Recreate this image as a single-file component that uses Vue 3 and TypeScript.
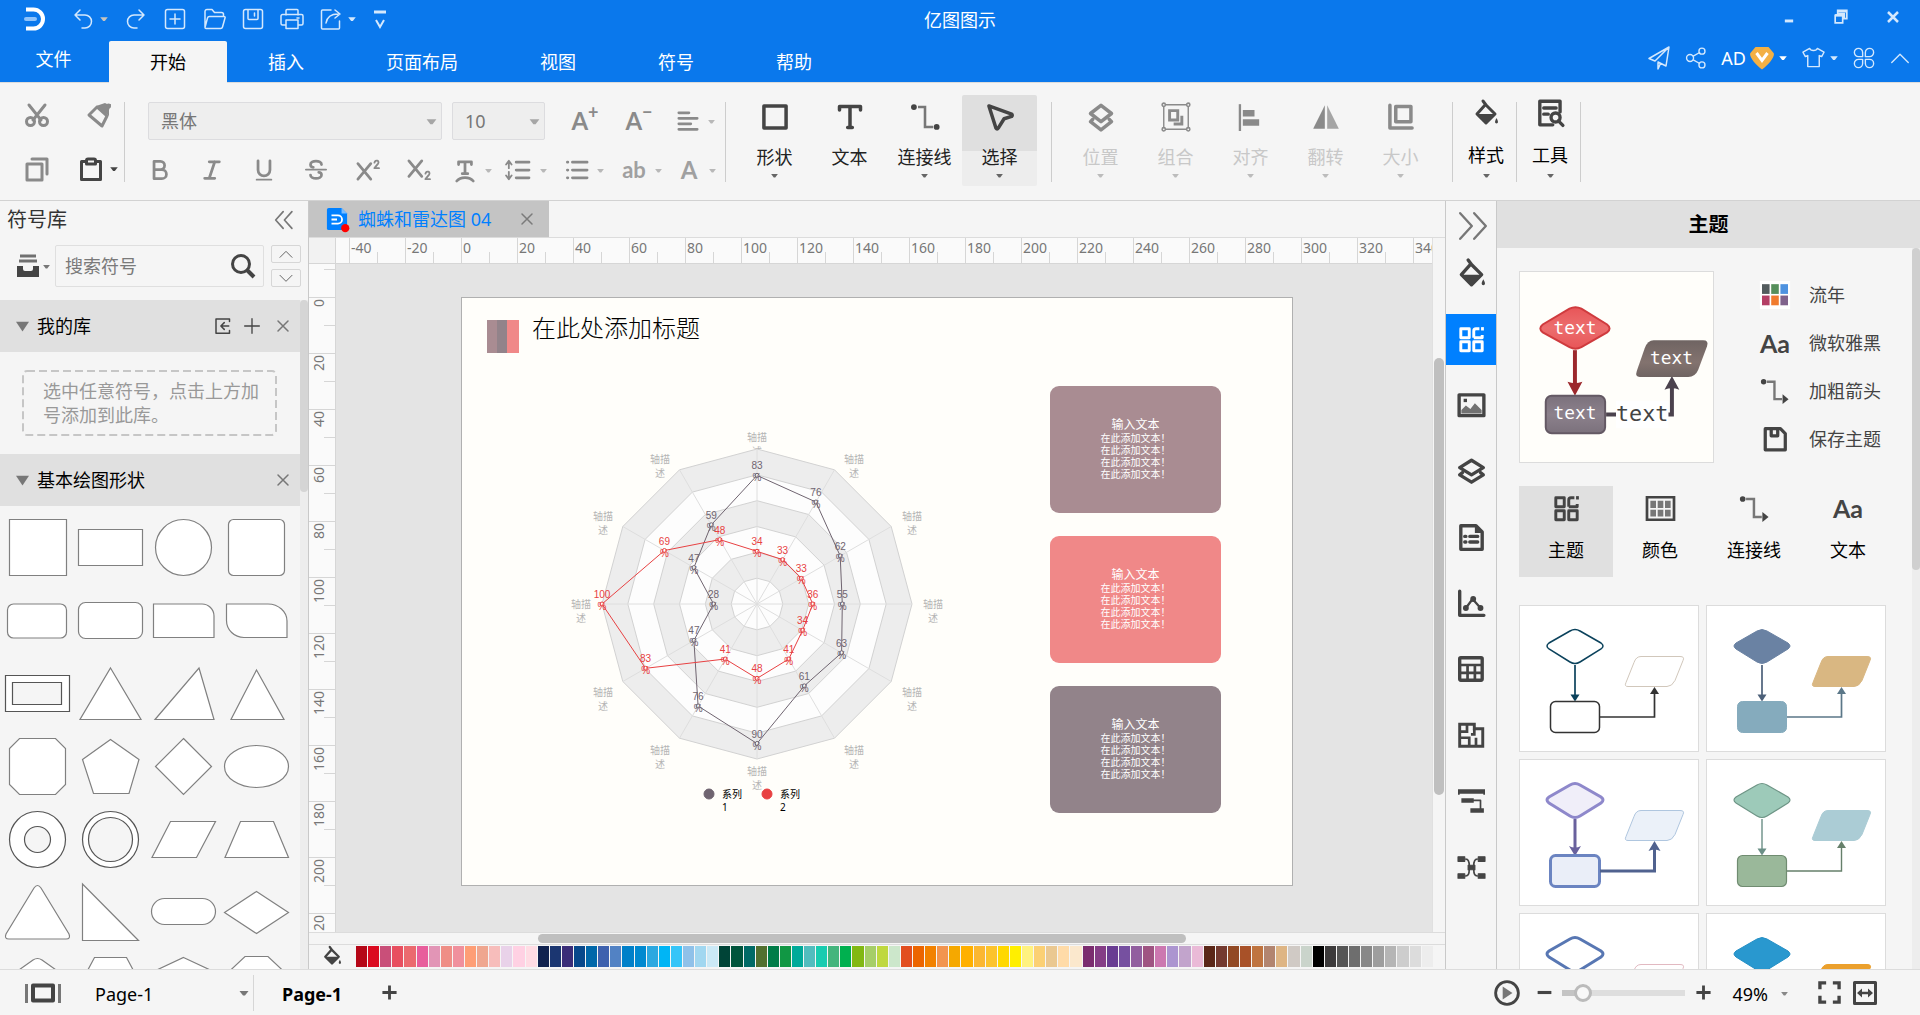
<script setup lang="ts">
import { h, ref } from 'vue'

const icons: Record<string, string> = {
  logo: '<path d="M2 2.500h7.500a9.500 9.500 0 0 1 0 19H2" fill="none" stroke="#fff" stroke-width="4"/><path d="M2 12h9" stroke="#8fc3fb" stroke-width="4" stroke-linecap="round"/>',
  undo: '<path d="M9 3 4 8l5 5M4 8h10a6.500 6.500 0 0 1 0 13h-3" class="thin"/>',
  redo: '<path d="m15 3 5 5-5 5M20 8H10a6.500 6.500 0 0 0 0 13h3" class="thin"/>',
  newDoc: '<rect x="2.500" y="2.500" width="19" height="19" rx="2" class="thin"/><path d="M12 7v10M7 12h10" class="thin"/>',
  open: '<path d="M3 20V4.500a2 2 0 0 1 2-2h5l2.500 3h7a2 2 0 0 1 2 2V9M3 20.500 5.500 11a2 2 0 0 1 2-1.500H22a1 1 0 0 1 1 1.500l-2.500 9a2 2 0 0 1-2 1.500H4a1 1 0 0 1-1-1z" class="thin"/>',
  saveThin: '<rect x="2.500" y="2.500" width="19" height="19" rx="2" class="thin"/><path d="M7 3v8.500a1 1 0 0 0 1 1h8a1 1 0 0 0 1-1V3M13.500 6v3" class="thin"/>',
  print: '<path d="M6 8V3.500a1 1 0 0 1 1-1h10a1 1 0 0 1 1 1V8M6 18H2.500a1.500 1.500 0 0 1-1.500-1.500V9a1.500 1.500 0 0 1 1.500-1.500h19A1.500 1.500 0 0 1 23 9v7.500a1.500 1.500 0 0 1-1.500 1.500H18M6 13h12v8.500H6zM17 11h2" class="thin"/>',
  exportIt: '<path d="M12 3H3.500a1 1 0 0 0-1 1v17a1 1 0 0 0 1 1h16a1 1 0 0 0 1-1v-7M7 16c1-6 5-9 12-9M16 3l5 4-5 4" class="thin"/>',
  custom: '<path d="M6 3.500h12v3H6z" fill="currentColor"/><path d="m8 13 4 7 4-7" fill="none" stroke="currentColor" stroke-width="2"/>',
  caret: '<path d="M3 8h18l-7 9h-4z" fill="currentColor"/>',
  minimize: '<path d="M7 15h10v3.500H7z" fill="currentColor"/>',
  restore: '<path d="M8 4h11v10h-3V8H8zM5 10h9v9H5z" fill="none" stroke="currentColor" stroke-width="2"/><path d="M5 10h9M8 5h11" stroke="currentColor" stroke-width="3"/>',
  closeBold: '<path d="m6 6 12 12M18 6 6 18" stroke="currentColor" stroke-width="3"/>',
  send: '<path d="M22 1 2 12.500l6 2.500L22 1l-3 19-8-4M22 1 8 15M11 16v7l2.500-5.500" class="thin"/>',
  share: '<circle cx="5.500" cy="12" r="3.800" class="thin"/><circle cx="18.500" cy="4.500" r="3.300" class="thin"/><circle cx="18.500" cy="19.500" r="3.300" class="thin"/><path d="m9 10 7-4M9 14l7 4" class="thin"/>',
  vip: '<path d="M5.500 1h13L24 7.500c0 5-6 11.500-12 16C6 19 0 12.500 0 7.500z" fill="#f3b044"/><path d="m6.500 7 5.500 7.500L17.500 7" fill="none" stroke="#fff" stroke-width="3"/>',
  shirt: '<path d="M8 2.500c1 3 7 3 8 0l7 4-2.500 4.500-2.500-1v11.500H6V10l-2.500 1L1 6.500z" class="thin"/>',
  clover: '<path d="M10.500 10.500H6A4.500 4.500 0 1 1 10.500 6zM13.500 10.500H18A4.500 4.500 0 1 0 13.500 6zM10.500 13.500H6a4.500 4.500 0 1 0 4.500 4.500zM13.500 13.500H18a4.500 4.500 0 1 1-4.500 4.500z" class="thin"/>',
  up: '<path d="m3 17 9-9 9 9" class="thin"/>',
  down: '<path d="m3 8 9 9 9-9" class="thin"/>',
  cut: '<path d="m4 2 12 15M20 2 8 17" class="bold"/><circle cx="5.500" cy="18.500" r="4" class="bold"/><circle cx="18.500" cy="18.500" r="4" class="bold"/>',
  brush: '<path d="m10 4 10 9-5 10L2 12z" class="bold"/><path d="m9 3 9-3 2 1 4 0-2 6 0 6z" fill="currentColor"/><circle cx="21.500" cy="3" r="2.500" fill="currentColor"/>',
  copy: '<path d="M2 7h15v16H2z" class="bold"/><path d="M7 2h15v15" class="bold"/>',
  paste: '<path d="M6 4.500H2.500v18h19v-18H18" class="bold"/><path d="M7.500 7V3.500a1.500 1.500 0 0 1 1.500-1.500h6a1.500 1.500 0 0 1 1.500 1.500V7z" class="bold"/>',
  bold: '<path d="M5.500 2.500h7a4.500 4.500 0 0 1 0 9h-7zM5.500 11.500h8.500a5 5 0 0 1 0 10H5.500z" class="bold"/>',
  italic: '<path d="M9 3h11M4 21h11M15 3 9 21" class="bold"/>',
  underline: '<path d="M5.500 2v10a6.500 6.500 0 0 0 13 0V2" class="bold"/><path d="M4 22.500h16" class="mid"/>',
  strike: '<path d="M1 11.500h22" class="mid"/><path d="M18 6c0-5-12-5-12 0 0 2 1 3 3 3M6 17.500c0 5 12 5 12 0 0-1.500-1-3-3-3" class="bold"/>',
  sup: '<path d="m1 5 14 17M15 5 1 22" class="bold"/><path d="M19 4c1-4 6-2 4 1l-4 5h5" class="mid"/>',
  sub: '<path d="m1 2 14 17M15 2 1 19" class="bold"/><path d="M19 16c1-4 6-2 4 1l-4 5h5" class="mid"/>',
  textFx: '<path d="M5 6V3h14v3M12 3v13M9 16h6" class="bold"/><path d="M3 24c4-5 14-5 18 0" class="bold"/>',
  lineHeight: '<path d="M3 3v7M3 14v8M0 6l3-4 3 4M0 18l3 4 3-4" class="mid"/><path d="M11 3.500h14M11 12h14M11 20.500h14" class="bold"/>',
  list: '<path d="M7 3.500h16M7 12h16M7 20.500h16" class="bold"/><path d="M1.500 3.500h.5M1.500 12h.5M1.500 20.500h.5" class="bold"/>',
  align: '<path d="M2 3h11M2 9h20M2 15h13M2 21h20" class="bold"/>',
  shape: '<path d="M2.500 2.500h19v19h-19z" class="bold"/>',
  text: '<path d="M3 6V3h18v3M12 3v18M10 21h4" class="bold"/>',
  link: '<circle cx="2.500" cy="3.500" r="2.500" fill="currentColor"/><circle cx="22" cy="20.500" r="2.500" fill="currentColor"/><path d="M6 3.500h6v17h7" fill="none" stroke="#777" stroke-width="2.200"/>',
  select: '<path d="M2.500 2.500 22 9.500q1 1 0 2l-6.500 2-5 8q-1 1.500-2 0z" class="bold"/>',
  position: '<path d="m12 2 9 7-9 7-9-7z" class="bold"/><path d="m5 14-2 2 9 7 9-7-2-2" class="bold"/>',
  group: '<path d="M1.500 1.500h21v21h-21z" fill="none" stroke="currentColor" stroke-width="1.200"/><path d="M6.500 6.500h7v8h-7zM17 11v7h-7" fill="none" stroke="currentColor" stroke-width="2.500"/><g fill="#f5f5f5" stroke="currentColor" stroke-width="1.300"><circle cx="1.500" cy="1.500" r="1.400"/><circle cx="22.500" cy="1.500" r="1.400"/><circle cx="1.500" cy="22.500" r="1.400"/><circle cx="22.500" cy="22.500" r="1.400"/></g>',
  alignObj: '<path d="M2.500 1v23" stroke="currentColor" stroke-width="2"/><path d="M5 6h10v5.500H5zM5 14h14v5.500H5z" fill="currentColor"/>',
  flip: '<path d="M11 2v20H1z" fill="currentColor"/><path d="M13 2v20h10z" fill="currentColor" opacity=".75"/>',
  size: '<path d="M2.500 2v19.500h19" class="bold"/><path d="M7.500 3h13v13h-13z" class="bold"/>',
  bucket: '<path d="m9 0 3 4M11.500 3.500 21 13l-9 9-9-9z" class="bold"/><path d="m2 13h20l-10 10z" fill="currentColor"/><path d="M22.500 17q3 5 0 5.500-3-.5 0-5.500" fill="currentColor"/>',
  tools: '<path d="M14 22.500H2.500v-21h18V11M6 7.500h11M6 13h4" class="bold"/><circle cx="16.500" cy="16" r="4" class="bold"/><path d="m19 19 4 4" class="bold"/>',
  theme: '<path d="M2.500 2.500h7.500v8H2.500zM14 10.500v-6q0-2 2-2h3M14 10.500h7.500V8M2.500 14h7.500v8H2.500zM14 14h7.500v8H14z" fill="none" stroke="currentColor" stroke-width="2.600" stroke-linejoin="round"/><path d="M20.500 1h2.500v3h-2.500z" fill="currentColor"/>',
  picture: '<path d="M1 2.500h22v18.500H1z" class="bold"/><path d="M3 19v-3l4-4 4 3 4-5 6 6v3z" fill="currentColor" opacity=".75"/><path d="M5 6h3v3H5z" fill="currentColor"/>',
  layers: '<path d="m12 2 10.500 6.500L12 15 1.500 8.500z" class="bold"/><path d="m4 13-2.500 2L12 21.500l10.500-6.500-2.500-2" class="bold"/>',
  doc: '<path d="M2.500 1.500H16l5.500 5.500v15.500h-19z" class="bold"/><path d="M15 2v6h6" fill="currentColor"/><path d="M6 11h1M10.500 11h7M6 16h1M10.500 16h7" class="bold"/>',
  chart: '<path d="M1.500 1v21.500H23" class="bold"/><path d="m7 16 6-8 7 8" class="mid"/><circle cx="7" cy="16" r="2.600" fill="currentColor"/><circle cx="13.500" cy="8" r="2.600" fill="currentColor"/><circle cx="20" cy="16" r="2.600" fill="currentColor"/>',
  table: '<rect x="1.500" y="1.500" width="20" height="20" rx="1" class="bold"/><path d="M2 8h19M2 15h19M8.500 8v13M15 8v13" fill="none" stroke="currentColor" stroke-width="2.400"/>',
  floor: '<path d="M1.500 2h13v4h7.500v15.500h-20.500z" fill="none" stroke="currentColor" stroke-width="2.600"/><path d="M8 2v6.500H2M2 14h8v7M14.500 6v5h-3M16 14v8" fill="none" stroke="currentColor" stroke-width="2.400"/>',
  gantt: '<path d="M0 1h24v4H0zM0 4h1.500v2H0zM22.500 4H24v2h-1.500zM3 9h11v4H3zM11 18h12v4H11z" fill="currentColor"/><path d="M14 11h6v8" class="thin"/>',
  mind: '<path d="M0 2.500h6v4H0zM18 2.500h6v4h-6zM0 17.500h6v4H0zM18 17.500h6v4h-6zM9 10h6v4H9z" fill="currentColor" stroke="currentColor" stroke-linejoin="round"/><path d="M7 4.500q3 0 3 6v3q0 6-3 6M17 4.500q-3 0-3 6v3q0 6 3 6" class="thin"/>',
  colors: '<path d="M0 2h24v20H0z" fill="none" stroke="currentColor" stroke-width="2.400"/><path d="M3 5h5v6.500H3zM9.500 5h5v6.500h-5zM16 5h5v6.500h-5zM3 13h5v6H3zM9.500 13h5v6h-5zM16 13h5v6h-5z" fill="#777"/>',
  connector: '<circle cx="1.500" cy="3.500" r="2.500" fill="currentColor"/><path d="M4.500 3.500h7v16h7" fill="none" stroke="#777" stroke-width="2.200"/><path d="m19 15 5.500 4.500-5.500 4.500z" fill="currentColor"/>',
  saveBold: '<path d="M3 2.500H17l4.500 4.500v15H3z" class="bold"/><path d="M8.500 3v6h6V3" class="bold"/>',
  swatches: '<path d="M-2-1h28v26H-2z" fill="#fff"/><path d="M0 2h7v9H0z" fill="#535c5e"/><path d="M8.500 2h7v9h-7z" fill="#568f5b"/><path d="M17 2h7v9h-7z" fill="#4f93e0"/><path d="M0 12.500h7v9H0z" fill="#b43f66"/><path d="M8.500 12.500h7v9h-7z" fill="#f07b2e"/><path d="M17 12.500h7v9h-7z" fill="#80638c"/>',
  collapse: '<path d="M11 2 2 12l9 10M21.500 2l-9 10 9 10" class="mid"/>',
  expand: '<path d="m1 1 10 11L1 23M13 1l10 11-10 11" class="mid"/>',
  library: '<path d="M4 2h16M3 7h18" stroke="#707070" stroke-width="3"/><path d="M1 12h6v3a2 2 0 0 0 2 2h6a2 2 0 0 0 2-2v-3h6v11H1z" fill="currentColor"/>',
  search: '<circle cx="10" cy="10" r="8.500" class="bold"/><path d="m16 16 7 7" stroke="currentColor" stroke-width="4"/>',
  importIt: '<path d="M22 6V2.500H4v19h18V18M21 12H11M15 7.500 10.500 12l4.500 4.500" class="mid"/>',
  plus: '<path d="M12 1v22M1 12h22" class="mid"/>',
  plusBold: '<path d="M12 2v20M2 12h20" stroke="currentColor" stroke-width="4"/>',
  minusBold: '<path d="M1 12h22" stroke="currentColor" stroke-width="5"/>',
  close: '<path d="m2 2 20 20M22 2 2 22" class="bold"/>',
  tri: '<path d="M0 3h24L12 21z" fill="currentColor"/>',
  file: '<path d="M3 0h14l6 6v16a2 2 0 0 1-2 2H3a2 2 0 0 1-2-2V2a2 2 0 0 1 2-2z" fill="#0080ff"/><path d="M17 0l6 6h-6z" fill="#7dbdff"/><path d="M6 8h7a4.500 4.500 0 0 1 0 9H6M6 12.500h6" fill="none" stroke="#fff" stroke-width="2"/><circle cx="21" cy="22" r="4.500" fill="#f00"/>',
  film: '<path d="M8 4.500h20v15H8z" fill="none" stroke="currentColor" stroke-width="4" stroke-linejoin="round"/><path d="M1.500 3v19M34.500 3v19" stroke="#777" stroke-width="3"/>',
  play: '<circle cx="12" cy="12" r="10.500" fill="none" stroke="currentColor" stroke-width="2.600"/><path d="m8 6 9 6-9 6z" fill="#777"/>',
  full: '<path d="M2 8.500V2h6.500M15.500 2H22v6.500M22 15.500V22h-6.500M8.500 22H2v-6.500" stroke="currentColor" stroke-width="3.500" fill="none"/>',
  fit: '<path d="M1.500 1.500h21v21h-21z" class="bold"/><path d="M6 12h12" stroke="currentColor" stroke-width="2.500"/><path d="m4 12 5-4.500v9zM20 12l-5-4.500v9z" fill="currentColor"/>',
}

const Icon = (props: { name: string; size?: number; w?: number }) =>
  h('svg', {
    width: props.w ?? props.size ?? 24,
    height: props.size ?? 24,
    viewBox: props.w ? `0 0 ${props.w} 24` : '0 0 24 24',
    'aria-hidden': 'true',
    class: 'icon',
    innerHTML: icons[props.name],
  })
Icon.props = ['name', 'size', 'w']

const menus = ['开始', '插入', '页面布局', '视图', '符号', '帮助']
const quick = ['newDoc', 'open', 'saveThin', 'print']
const formats = ['bold', 'italic', 'underline', 'strike', 'sup', 'sub']
const insertTools = [
  { icon: 'shape', label: '形状', caret: true },
  { icon: 'text', label: '文本', caret: false },
  { icon: 'link', label: '连接线', caret: true },
  { icon: 'select', label: '选择', caret: true, active: true },
]
const arrangeTools = [
  { icon: 'position', label: '位置' },
  { icon: 'group', label: '组合' },
  { icon: 'alignObj', label: '对齐' },
  { icon: 'flip', label: '翻转' },
  { icon: 'size', label: '大小' },
]

const shapes = [
  '<path d="M8.500 8.500h57v56h-57z"/>',
  '<path d="M4.500 18.500h64v36h-64z"/>',
  '<circle cx="36.500" cy="36.500" r="28"/>',
  '<rect x="8.500" y="8.500" width="56" height="56" rx="5"/>',
  '<rect x="6.500" y="20" width="59" height="34" rx="6"/>',
  '<rect x="4.500" y="18.500" width="64" height="36" rx="7"/>',
  '<path d="M6.500 20H55a12 12 0 0 1 12 12v21.500H6.500z"/>',
  '<path d="M6.500 20H48a19 17 0 0 1 19 17v16.500H24a17.500 17 0 0 1-17.500-17z"/>',
  '<g class="dark"><path d="M4.500 18.500h64v36h-64z"/><path d="M11.500 25.500h49v22h-49z" class="hole"/></g>',
  '<path d="M36.500 11 67 62.500H6z"/>',
  '<path d="m52 11 15 51.500H8z"/>',
  '<path d="M36.500 13 64 62.500H11z"/>',
  '<path d="M18.500 8.500h36l10 10v36l-10 10h-36l-10-10v-36z"/>',
  '<path d="m36.500 9.500 28.500 20-10 34H19.500l-11-34z"/>',
  '<path d="M36.500 8.500l28 28-28 28-28-28z"/>',
  '<ellipse cx="36.500" cy="36.500" rx="32" ry="21"/>',
  '<g class="dark"><circle cx="36.500" cy="36.500" r="28"/><circle cx="36.500" cy="36.500" r="13" class="hole"/></g>',
  '<g class="dark"><circle cx="36.500" cy="36.500" r="28"/><circle cx="36.500" cy="36.500" r="22" class="hole"/></g>',
  '<path d="M23.500 18.500h45l-19 36H5z"/>',
  '<path d="M20.500 18.500h33l15 36H5z"/>',
  '<path d="M33 12q3.500-5 7 0l28 46q2 5-3 5H8q-5 0-3-5z"/>',
  '<path d="M8.500 8v56.500h56z"/>',
  '<rect x="4.500" y="22.500" width="64" height="26" rx="13"/>',
  '<path d="M36.500 15.500l32 21-32 21-32-21z"/>',
  '<path d="M32 11q4.500-3 9 0l24 17-9 36H17L8 28z"/>',
  '<path d="M20.500 8.500h32l16 30-16 28h-32l-16-28z"/>',
  '<path d="m36.500 8.500 30 14v28l-30 14-30-14v-28z"/>',
  '<path d="M25 7.500h23l18 17v23l-18 17H25l-18-17v-23z"/>',
]

const hTicks = Array.from({ length: 20 }, (_, i) => -40 + i * 20)
const vTicks = Array.from({ length: 12 }, (_, i) => i * 20)

const palette =
  'b50717 db0a20 c94f79 e84f60 eb6a6f e85e9c e295b6 ef8e86 f0909d fe9e76 efa68f f7bdbb e9d2e9 ffd1e3 ffdce4 10224f 1b3671 3a2d78 07488b 0067a9 3e61ae 5282c4 0080c9 0089d0 2ca8e0 00b5f5 36c5f8 8fc1e9 a1d7f0 cbe9f6 004437 00543c 006a66 52702f 007c48 119744 00aa99 52bdbe 18ccb0 44b57d 00b04f 82b813 a6ce68 bfd83f cce7cb e24e20 ec6500 f28200 f2954f f5a800 ffb000 fbb731 fcc32c ffd800 ffef00 fff27f fbd074 eac891 ffdba8 fbe8cd 7b2d6f 853d86 693c92 7650a0 925f9f 9f5482 cc78b0 ac95d0 c2a4cc eabad7 5b2718 743a30 924924 a85128 bf7440 b28570 deb584 d0cac5 cad4cb 000000 3c3a3b 555555 6e6e6e 888888 9e9e9e b5b5b5 cdcdcd dcdcdc ededed'
    .split(' ')
    .map((c) => '#' + c)

// Radar chart, drawn round its own origin
const R = 155
const point = (i: number, r: number) => {
  const a = (i * Math.PI) / 6
  return { x: Math.round(Math.sin(a) * r * 10) / 10, y: Math.round(-Math.cos(a) * r * 10) / 10 }
}
const polygon = (values: number[]) =>
  values.map((v, i) => { const p = point(i, (v * R) / 100); return `${p.x},${p.y}` }).join(' ')
const rings = [6, 5, 4, 3, 2, 1].map((n) => ({
  points: polygon(Array(12).fill((n * 100) / 6)),
  fill: n % 2 ? '#fdfdfd' : '#ededed',
}))
const spokes = Array.from({ length: 12 }, (_, i) => point(i, R))
const series = [
  { name: '1', color: '#6f6470', x: -48, values: [83, 76, 62, 55, 63, 61, 90, 76, 47, 28, 47, 59] },
  { name: '2', color: '#e84142', x: 10, values: [34, 33, 33, 36, 34, 41, 48, 41, 83, 100, 69, 48] },
]
const axisLabels = [
  [0, -163], [97, -141], [155, -84], [176, 4], [155, 92], [97, 150],
  [0, 171], [-97, 150], [-154, 92], [-176, 4], [-154, -84], [-97, -141],
]
const textCards = ['#a98c92', '#f08888', '#92838a']

const sideTools = ['bucket', 'theme', 'picture', 'layers', 'doc', 'chart', 'table', 'floor', 'gantt', 'mind']
const themeTabs = [
  { icon: 'theme', label: '主题' },
  { icon: 'colors', label: '颜色' },
  { icon: 'connector', label: '连接线' },
  { icon: '', label: '文本' },
]
const themeRows = [
  { icon: 'swatches', label: '流年' },
  { icon: '', label: '微软雅黑' },
  { icon: 'connector', label: '加粗箭头' },
  { icon: 'saveBold', label: '保存主题' },
]
const themes = [
  { d: 'none', ds: '#0b425c', dw: 1.5, r: 'none', rs: '#333', rw: 1.5, p: 'none', ps: '#d1c7bb', a: '#0b425c', b: '#333', w: 1.7 },
  { d: '#6a82a3', ds: '#6a82a3', dw: 1, r: '#85abbd', rs: '#85abbd', rw: 1, p: '#d9b782', ps: '#d9b782', a: '#4c6079', b: '#5b7788', w: 1.7 },
  { d: '#f0eef9', ds: '#8e88cb', dw: 3, r: '#eaeef8', rs: '#6b84c1', rw: 3, p: '#ebf1f9', ps: '#afc6df', a: '#69619d', b: '#50628f', w: 3 },
  { d: '#9dcab9', ds: '#6e9586', dw: 1.2, r: '#9ab89a', rs: '#708c71', rw: 1.2, p: '#abccd5', ps: '#abccd5', a: '#6b8f86', b: '#66806b', w: 1.4 },
  { d: 'none', ds: '#5877b3', dw: 3, r: 'none', rs: '#5877b3', rw: 3, p: 'none', ps: '#e2b9c1', a: '#5877b3', b: '#5877b3', w: 3 },
  { d: '#2998cf', ds: '#258fc5', dw: 1, r: '#2998cf', rs: '#2998cf', rw: 1, p: '#eba02d', ps: '#eba02d', a: '#258fc5', b: '#777', w: 1 },
]
const zoom = ref(11)
const query = ref('')
</script>

<template>
  <div class="app">
    <header class="top">
      <div class="title-row">
        <div class="quick">
          <Icon name="logo" class="logo" />
          <button class="plain" aria-label="撤销"><Icon name="undo" /><Icon name="caret" :size="10" class="sand" /></button>
          <button class="plain" aria-label="重做"><Icon name="redo" /></button>
          <button v-for="q in quick" :key="q" class="plain" :aria-label="q"><Icon :name="q" /></button>
          <button class="plain" aria-label="导出"><Icon name="exportIt" /><Icon name="caret" :size="10" /></button>
          <button class="plain custom" aria-label="自定义"><Icon name="custom" /></button>
        </div>
        <div class="app-title">亿图图示</div>
        <div class="window">
          <button class="plain" aria-label="最小化"><Icon name="minimize" :size="20" /></button>
          <button class="plain" aria-label="还原"><Icon name="restore" :size="20" /></button>
          <button class="plain" aria-label="关闭"><Icon name="closeBold" :size="20" /></button>
        </div>
      </div>
      <div class="menu-row">
        <nav class="menus">
          <button class="menu file">文件</button>
          <button v-for="(m, i) in menus" :key="m" class="menu" :class="{ active: i === 0 }">{{ m }}</button>
        </nav>
        <div class="account">
          <button class="plain" aria-label="发送"><Icon name="send" /></button>
          <button class="plain" aria-label="分享"><Icon name="share" :size="22" /></button>
          <button class="plain ad">AD<Icon name="vip" /><Icon name="caret" :size="10" /></button>
          <button class="plain" aria-label="皮肤"><Icon name="shirt" :size="23" /><Icon name="caret" :size="10" /></button>
          <button class="plain" aria-label="应用"><Icon name="clover" :size="22" /></button>
          <button class="plain" aria-label="收起"><Icon name="up" :size="22" /></button>
        </div>
      </div>
    </header>

    <section class="ribbon">
      <div class="clip">
        <button class="tool" aria-label="剪切"><Icon name="cut" /></button>
        <button class="tool" aria-label="格式刷"><Icon name="brush" /></button>
        <button class="tool" aria-label="复制"><Icon name="copy" /></button>
        <button class="tool strong" aria-label="粘贴"><Icon name="paste" /><Icon name="caret" :size="10" /></button>
      </div>
      <div class="bar"></div>
      <div class="font">
        <div class="font-row">
          <label class="combo wide"><select aria-label="字体"><option>黑体</option></select><Icon name="caret" :size="13" /></label>
          <label class="combo"><select aria-label="字号"><option>10</option></select><Icon name="caret" :size="13" /></label>
          <button class="tool glyph">A<sup>+</sup></button>
          <button class="tool glyph">A<sup>−</sup></button>
          <button class="tool pair" aria-label="对齐"><Icon name="align" :size="22" /><Icon name="caret" :size="9" class="faint" /></button>
        </div>
        <div class="font-row second">
          <button v-for="f in formats" :key="f" class="tool format" :aria-label="f"><Icon :name="f" :size="22" /></button>
          <button class="tool pair" aria-label="文字效果"><Icon name="textFx" :size="22" /><Icon name="caret" :size="9" class="faint" /></button>
          <button class="tool pair leading" aria-label="行距"><Icon name="lineHeight" :w="26" :size="22" /><Icon name="caret" :size="9" class="faint" /></button>
          <button class="tool pair" aria-label="列表"><Icon name="list" :size="22" /><Icon name="caret" :size="9" class="faint" /></button>
          <button class="tool pair letter">ab<Icon name="caret" :size="9" class="faint" /></button>
          <button class="tool pair letter"><span>A</span><Icon name="caret" :size="9" class="faint" /></button>
        </div>
      </div>
      <div class="bar"></div>
      <div class="bigs">
        <button v-for="t in insertTools" :key="t.label" class="big" :class="{ active: t.active }">
          <Icon :name="t.icon" :size="28" /><span>{{ t.label }}</span><Icon v-if="t.caret" name="caret" :size="9" class="drop" />
        </button>
      </div>
      <div class="bar"></div>
      <div class="bigs">
        <button v-for="t in arrangeTools" :key="t.label" class="big off">
          <Icon :name="t.icon" :size="28" /><span>{{ t.label }}</span><Icon name="caret" :size="9" class="drop" />
        </button>
      </div>
      <div class="bar"></div>
      <button class="big narrow"><Icon name="bucket" :size="24" /><span>样式</span><Icon name="caret" :size="9" class="drop" /></button>
      <div class="bar"></div>
      <button class="big narrow"><Icon name="tools" :size="27" /><span>工具</span><Icon name="caret" :size="9" class="drop" /></button>
      <div class="bar"></div>
    </section>

    <main class="body">
      <aside class="left">
        <div class="left-head"><span>符号库</span><button class="plain" aria-label="折叠"><Icon name="collapse" :size="20" /></button></div>
        <div class="search-row">
          <button class="plain lib" aria-label="库"><Icon name="library" /><Icon name="caret" :size="9" /></button>
          <label class="search"><input v-model="query" type="text" placeholder="搜索符号" aria-label="搜索符号" /><Icon name="search" /></label>
          <div class="steps">
            <button aria-label="上一个"><Icon name="up" :size="16" /></button>
            <button aria-label="下一个"><Icon name="down" :size="16" /></button>
          </div>
        </div>
        <div class="lib-scroll">
          <div class="lib-list">
            <div class="lib-head">
              <Icon name="tri" :size="13" /><h3>我的库</h3>
              <button class="plain" aria-label="导入"><Icon name="importIt" :size="18" /></button>
              <button class="plain" aria-label="添加"><Icon name="plus" :size="16" /></button>
              <button class="plain grey" aria-label="关闭"><Icon name="close" :size="12" /></button>
            </div>
            <div class="hint">
              <svg class="dash" aria-hidden="true"><rect x="1" y="1" rx="4" /></svg>
              <p>选中任意符号，点击上方加号添加到此库。</p>
            </div>
            <div class="lib-head">
              <Icon name="tri" :size="13" /><h3>基本绘图形状</h3>
              <button class="plain grey" aria-label="关闭"><Icon name="close" :size="12" /></button>
            </div>
            <div class="shapes">
              <button v-for="(s, i) in shapes" :key="i" :aria-label="'形状 ' + (i + 1)">
                <svg class="shape" width="73" height="73" viewBox="0 0 73 73" v-html="s"></svg>
              </button>
            </div>
          </div>
          <div class="track"><div class="thumb left-thumb"></div></div>
        </div>
      </aside>

      <section class="center">
        <div class="doc-tabs">
          <div class="doc-tab"><Icon name="file" :size="22" /><span>蜘蛛和雷达图 04</span><button class="plain grey" aria-label="关闭"><Icon name="close" :size="12" /></button></div>
        </div>
        <div class="work">
          <div class="ruler-x">
            <div class="corner"></div>
            <div class="ticks-x">
              <div v-for="t in hTicks" :key="t" class="tick-x">{{ t }}</div>
            </div>
          </div>
          <div class="mid-row">
            <div class="ruler-y">
              <div v-for="t in vTicks" :key="t" class="tick-y"><span>{{ t === 220 ? 20 : t }}</span></div>
            </div>
            <div class="canvas">
              <article class="page">
                <div class="mark"><i></i><i></i><i></i></div>
                <h1>在此处添加标题</h1>
                <svg class="radar" width="380" height="400" viewBox="-190 -180 380 400">
                  <g class="axis">
                    <text v-for="(a, i) in axisLabels" :key="i" text-anchor="middle">
                      <tspan :x="a[0]" :y="a[1]">轴描</tspan><tspan :x="a[0]" :y="a[1] + 14">述</tspan>
                    </text>
                  </g>
                  <polygon v-for="(r, i) in rings" :key="i" :points="r.points" :fill="r.fill" stroke="#d2d2d2" />
                  <line v-for="(s, i) in spokes" :key="i" x1="0" y1="0" :x2="s.x" :y2="s.y" stroke="#dedede" />
                  <g v-for="s in series" :key="s.name" :stroke="s.color">
                    <polygon :points="polygon(s.values)" fill="none" />
                    <g v-for="(v, i) in s.values" :key="i">
                      <circle :cx="point(i, v * R / 100).x" :cy="point(i, v * R / 100).y" r="2" fill="#fff" />
                      <text class="value" text-anchor="middle" :fill="s.color">
                        <tspan :x="point(i, v * R / 100).x" :y="point(i, v * R / 100).y - 6">{{ v }}</tspan>
                        <tspan :x="point(i, v * R / 100).x" :y="point(i, v * R / 100).y + 6">%</tspan>
                      </text>
                    </g>
                    <circle :cx="s.x" cy="190" r="5" :fill="s.color" />
                    <text class="legend"><tspan :x="s.x + 13" y="194">系列</tspan><tspan :x="s.x + 13" y="207">{{ s.name }}</tspan></text>
                  </g>
                </svg>
                <div class="cards">
                  <div v-for="c in textCards" :key="c" class="card" :style="{ background: c }">
                    <h2>输入文本</h2>
                    <p v-for="n in 4" :key="n">在此添加文本！</p>
                  </div>
                </div>
              </article>
            </div>
          </div>
          <div class="scroll-y"><div class="thumb"></div></div>
          <div class="scroll-x"><div class="thumb"></div></div>
        </div>
        <div class="palette">
          <Icon name="bucket" :size="18" />
          <div class="swatches"><button v-for="c in palette" :key="c" :aria-label="c" :style="{ background: c }"></button></div>
        </div>
      </section>

      <nav class="side">
        <button class="side-top" aria-label="展开"><Icon name="expand" :size="28" /></button>
        <button v-for="s in sideTools" :key="s" :class="{ active: s === 'theme' }" :aria-label="s"><Icon :name="s" :size="27" /></button>
      </nav>

      <aside class="right">
        <h2 class="right-head">主题</h2>
        <div class="right-scroll">
          <div class="right-list">
            <div class="current">
              <svg class="preview" width="195" height="192" viewBox="0 0 195 192">
                <defs>
                  <linearGradient id="red" x2="0" y2="1"><stop stop-color="#e85558" /><stop offset=".5" stop-color="#ec6e6e" /><stop offset="1" stop-color="#e85558" /></linearGradient>
                  <linearGradient id="brown" x2="0" y2="1"><stop stop-color="#6f6462" /><stop offset=".6" stop-color="#83736f" /><stop offset="1" stop-color="#6f6462" /></linearGradient>
                  <linearGradient id="plum" x2="0" y2="1"><stop stop-color="#7b717c" /><stop offset=".5" stop-color="#8c818c" /><stop offset="1" stop-color="#7b717c" /></linearGradient>
                </defs>
                <path d="M50 37q6-3 12 0l26 16q5 4 0 8L62 76q-6 3-12 0L23 61q-5-4 0-8z" fill="url(#red)" stroke="#cf3b3e" stroke-width="2" />
                <path d="M55.500 79v36" stroke="#9c282c" stroke-width="4" /><path d="M48 111q7.500 3 15 0l-7.500 14z" fill="#9c282c" />
                <rect x="26" y="125" width="60" height="38" rx="6" fill="url(#plum)" stroke="#645964" stroke-width="2" />
                <path d="M87 144h66.500v-28" stroke="#4b424d" stroke-width="4" fill="none" /><path d="M146 119q7.500-3 15 0l-7.500-14z" fill="#4b424d" />
                <path d="M97 130h53v28H97z" fill="#fff" />
                <path d="M135 69h50q6 0 4 6l-9 24q-3 7-10 7h-49q-5 0-3-6l8-23q3-8 9-8z" fill="url(#brown)" />
                <g font-size="18" fill="#fff" text-anchor="middle"><text x="55.500" y="63">text</text><text x="55.500" y="149">text</text><text x="153" y="93">text</text></g>
                <text x="123.500" y="151" font-size="22" fill="#444" text-anchor="middle">text</text>
              </svg>
              <div class="rows">
                <button v-for="r in themeRows" :key="r.label">
                  <Icon v-if="r.icon" :name="r.icon" :size="26" /><b v-else class="aa">Aa</b><span>{{ r.label }}</span>
                </button>
              </div>
            </div>
            <div class="tabs">
              <button v-for="(t, i) in themeTabs" :key="t.label" :class="{ active: i === 0 }">
                <Icon v-if="t.icon" :name="t.icon" :size="27" /><b v-else class="aa">Aa</b><span>{{ t.label }}</span>
              </button>
            </div>
            <div class="themes">
              <button v-for="(t, i) in themes" :key="i" :aria-label="'主题 ' + (i + 1)">
                <svg width="178" height="145" viewBox="1 1 178 145" fill="none">
                  <path d="M51 26q5-3 10 0l21 12q4 3 0 6L61 57q-5 3-10 0L30 44q-4-3 0-6z" :fill="t.d" :stroke="t.ds" :stroke-width="t.dw" />
                  <path d="M56 60v31" :stroke="t.a" :stroke-width="t.w" />
                  <path v-if="t.w === 3" d="M50 87q6 3 12 0l-6 10z" :fill="t.a" /><path v-else d="M51.500 89.500h9l-4.500 7z" :fill="t.a" />
                  <rect x="31.500" y="96.500" width="49" height="31" rx="5" :fill="t.r" :stroke="t.rs" :stroke-width="t.rw" />
                  <path d="M81 112h54.500V87" :stroke="t.b" :stroke-width="t.w" />
                  <path v-if="t.w === 3" d="M129.500 92q6-3 12 0l-6-10z" :fill="t.b" /><path v-else d="M131 89h9l-4.500-7z" :fill="t.b" />
                  <path d="M122 51.500h39q5 0 3 4l-8 20q-3 6-8 6h-39q-4 0-2-4l8-20q2-6 7-6z" :fill="t.p" :stroke="t.ps" />
                </svg>
              </button>
            </div>
          </div>
          <div class="track"><div class="thumb right-thumb"></div></div>
        </div>
      </aside>
    </main>

    <footer class="status">
      <button class="plain film" aria-label="页面视图"><Icon name="film" :w="36" /></button>
      <label class="page-pick"><select aria-label="页面"><option>Page-1</option></select><Icon name="caret" :size="12" /></label>
      <button class="plain page-tab">Page-1</button>
      <button class="plain" aria-label="新建页面"><Icon name="plusBold" :size="17" /></button>
      <div class="zoom">
        <button class="plain" aria-label="播放"><Icon name="play" :size="26" /></button>
        <button class="plain" aria-label="缩小"><Icon name="minusBold" :size="15" /></button>
        <input v-model="zoom" type="range" min="0" max="100" aria-label="缩放" />
        <button class="plain" aria-label="放大"><Icon name="plusBold" :size="17" /></button>
        <button class="plain percent">49%<Icon name="caret" :size="9" /></button>
        <button class="plain" aria-label="全屏"><Icon name="full" :size="23" /></button>
        <button class="plain" aria-label="适应宽度"><Icon name="fit" /></button>
      </div>
    </footer>
  </div>
</template>

<style>
html, body, #app { height: 100%; }
body { margin: 0; }
.icon { flex: none; overflow: visible; display: block; }
.icon .thin, .icon .mid, .icon .bold { fill: none; stroke: currentColor; stroke-linecap: round; stroke-linejoin: round; }
.icon .thin { stroke-width: 1.5; }
.icon .mid { stroke-width: 2; }
.icon .bold { stroke-width: 3; }
</style>

<style scoped>
* { box-sizing: border-box; }
.app { height: 100%; display: flex; flex-direction: column; overflow: hidden; background: #f5f5f5; color: #000; font: 400 18px/24px "Noto Sans", "Noto Sans CJK SC", sans-serif; }
button, select, input { font: inherit; color: inherit; }
button { padding: 0; border: 0; background: none; }
h1, h2, h3, p { margin: 0; font-weight: inherit; }
.plain { display: flex; align-items: center; gap: 4px; }
.grey { color: #7b7b7b; }

.top { background: #0a78ec; color: #fff; }
.title-row { height: 41px; display: grid; grid-template-columns: 1fr auto 1fr; align-items: start; }
.app-title { line-height: 41px; }
.quick { display: flex; align-items: center; gap: 15px; padding-left: 24px; color: #d4e8fd; height: 38px; }
.quick .logo { margin-right: 8px; }
.quick .custom { margin-left: -4px; }
.sand { color: #c9c4bd; }
.window { display: flex; justify-content: flex-end; height: 34px; color: #d4e8fd; padding-right: 1px; }
.window button { width: 52px; justify-content: center; }
.menu-row { height: 41px; display: flex; justify-content: space-between; }
.menus { display: flex; }
.menu { padding: 0 41px; border-radius: 2px 2px 0 0; }
.menu.file { width: 109px; padding: 0 2px 5px 0; }
.menu.active { position: relative; background: #f5f5f5; color: #000; box-shadow: 0 1px #f5f5f5; }
.account { display: flex; gap: 14px; padding: 0 9px 8px 0; color: #d4e8fd; }
.ad { color: #fff; }

.ribbon { height: 119px; flex: none; display: flex; border-bottom: 1px solid #d2d2d2; box-shadow: inset 0 1px #dcdcdc; }
.bar { width: 1px; height: 80px; margin-top: 20px; background: #cdcdcd; }
.tool { display: flex; align-items: center; justify-content: center; color: #8a8a8a; gap: 8px; }
.tool.strong { color: #444; }
.faint { color: #b8b8b8; }
.clip { width: 124px; padding: 6px 0 0 7px; display: grid; grid-template-columns: 60px 57px; grid-template-rows: 54px 54px; }
.clip .tool:nth-child(even) { padding-left: 6px; gap: 6px; }
.font { width: 600px; padding: 13px 0 0 9px; }
.font-row { height: 52px; display: flex; align-items: center; }
.font-row.second { height: 46px; }
.combo { display: flex; align-items: center; position: relative; width: 93px; height: 38px; margin-left: 10px; border: 1px solid #dcdcdf; border-radius: 2px; background: #eee; color: #777; }
.combo.wide { width: 294px; margin-left: 14px; }
.combo select, .page-pick select { flex: 1; width: 100%; height: 100%; appearance: none; border: 0; background: none; padding: 0 12px; }
.combo .icon { position: absolute; right: 3px; color: #a6a6a6; }
.glyph { width: 54px; font: 700 24px/30px Lato, sans-serif; gap: 0; }
.combo + .glyph { margin-left: 13px; }
.glyph sup { font-size: 18px; line-height: 12px; align-self: flex-start; }
.format { width: 52px; }
.pair { width: 56px; justify-content: flex-start; padding-left: 9px; }
.pair.leading { padding-left: 4px; }
.font-row:first-child .pair { margin-left: 2px; }
.letter { font: 700 22px/24px Lato, sans-serif; color: #a0a0a0; }
.letter span { width: 22px; font-size: 24px; }
.bigs { display: flex; padding: 0 14px 0 11px; }
.big { width: 75px; height: 91px; margin-top: 13px; padding-top: 8px; border-radius: 2px; display: flex; flex-direction: column; align-items: center; color: #444; }
.big span { margin-top: 14px; color: #222; }
.big .drop { margin-top: 2px; color: #666; }
.big.active { background: linear-gradient(#dfdfdf 56px, #ededed 56px); }
.big.off { color: #8a8a8a; }
.big.off span { color: #c8c8c8; }
.big.off .drop { color: #bcbcbc; }
.big.narrow { width: 63px; height: 91px; padding: 4px 0 0 3px; }
.big.narrow .icon:first-child { height: 28px; }
.big.narrow span { margin-top: 16px; color: #000; }
.big.narrow .drop { margin-top: 4px; }

.body { flex: 1; min-height: 0; display: flex; }
.left { flex: none; width: 309px; display: flex; flex-direction: column; border-right: 1px solid #c9c9c9; }
.left-head { height: 44px; padding: 0 14px 6px 7px; display: flex; justify-content: space-between; align-items: center; font-size: 20px; color: #333; }
.left-head button { color: #777; }
.search-row { display: flex; height: 42px; margin-bottom: 13px; padding-right: 7px; }
.lib { flex: none; width: 55px; padding-left: 16px; gap: 2px; color: #444; }
.lib .icon:last-child { color: #777; }
.search { flex: 1; min-width: 0; display: flex; align-items: center; padding-right: 8px; border: 1px solid #dfdfdf; border-radius: 2px; color: #444; }
.search input { flex: 1; min-width: 0; height: 100%; border: 0; background: none; padding: 0 9px; outline: 0; }
.search input::placeholder { color: #7a7a7a; opacity: 1; }
.steps { flex: none; width: 30px; margin-left: 7px; display: flex; flex-direction: column; justify-content: space-between; }
.steps button { height: 18px; display: grid; place-items: center; border: 1px solid #d6d6d6; border-radius: 2px; color: #666; }
.lib-scroll { flex: 1; min-height: 0; display: flex; }
.lib-list { flex: 1; overflow: hidden; }
.track { width: 8px; background: #ededed; }
.thumb { background: #bfbfbf; border-radius: 5px; }
.left-thumb { height: 192px; background: #d5d5d5; }
.lib-head { height: 52px; padding: 0 11px 0 16px; display: flex; align-items: center; gap: 8px; background: #e0e0e0; color: #777; }
.lib-head h3 { flex: 1; font-size: 18px; color: #000; }
.lib-head button { color: #444; margin-left: 5px; }
.lib-head .grey { color: #777; margin: 0 0 0 9px; }
.hint { height: 66px; margin: 18px 23px 18px 22px; padding: 9px 12px 0 21px; position: relative; color: #999; }
.dash { position: absolute; inset: 0; width: 100%; height: 100%; }
.dash rect { width: calc(100% - 2px); height: calc(100% - 2px); fill: none; stroke: #c6c6c6; stroke-width: 2; stroke-dasharray: 8 4; }
.shapes { display: grid; grid-template-columns: repeat(4, 73px); grid-auto-rows: 73px; padding: 5px 0 0 1px; }
.shape { display: block; fill: #fff; stroke: #808080; stroke-width: 1.2; }
.shape :deep(.dark) { stroke: #555; }
.shape :deep(.hole) { fill: #f5f5f5; }

.center { flex: 1; min-width: 0; display: flex; flex-direction: column; }
.doc-tabs { height: 37px; display: flex; border-bottom: 1px solid #dcdcdc; }
.doc-tab { width: 240px; padding: 0 16px 0 17px; display: flex; align-items: center; gap: 10px; background: #c4c4c4; color: #0080ff; }
.doc-tab span { flex: 1; white-space: nowrap; }
.work { flex: 1; min-height: 0; display: grid; grid-template-columns: minmax(0, 1fr) 13px; grid-template-rows: 26px minmax(0, 1fr) 13px; }
.ruler-x { display: flex; overflow: hidden; background: #fafafa; border-bottom: 1px solid #d6d6d6; }
.corner { flex: none; width: 27px; background: #f2f2f2; border-right: 1px solid #d6d6d6; }
.ticks-x { display: flex; padding-left: 13px; }
.tick-x { flex: none; width: 56px; padding-left: 1px; border-left: 1px solid #d6d6d6; font-size: 14px; line-height: 19px; color: #777; background: linear-gradient(#d6d6d6, #d6d6d6) 27px 100% / 1px 11px no-repeat; }
.mid-row { grid-column: 1; grid-row: 2; min-height: 0; display: flex; overflow: hidden; }
.ruler-y { flex: none; width: 27px; padding-top: 33px; background: linear-gradient(#d6d6d6, #d6d6d6) 100% 5px / 11px 1px no-repeat #fafafa; border-right: 1px solid #d6d6d6; }
.tick-y { height: 56px; border-top: 1px solid #d6d6d6; padding: 1px 0 0 1px; font-size: 14px; line-height: 18px; color: #777; background: linear-gradient(#d6d6d6, #d6d6d6) 100% 27px / 11px 1px no-repeat; }
.tick-y span { display: block; width: 18px; height: fit-content; writing-mode: vertical-rl; transform: rotate(180deg); }
.canvas { flex: 1; min-width: 0; overflow: hidden; padding: 33px 0 0 125px; background: #e4e4e4; }
.page { position: relative; width: 832px; height: 589px; border: 1px solid #b0b0b0; background: #fffefa; }
.mark { position: absolute; left: 25px; top: 22px; display: flex; height: 33px; }
.mark i { width: 10px; background: #a98c92; }
.mark i:nth-child(2) { background: #92838a; }
.mark i:nth-child(3) { width: 12px; background: #f08888; }
.page h1 { position: absolute; left: 70px; top: 15px; font-size: 24px; line-height: 30px; font-weight: 300; }
.radar { position: absolute; left: 105px; top: 126px; }
.radar text { stroke: none; font-size: 10px; font-weight: 400; }
.radar .value { font-family: "Liberation Sans", sans-serif; }
.axis { fill: #b5b5b5; }
.cards { position: absolute; left: 588px; top: 88px; display: flex; flex-direction: column; gap: 23px; }
.card { width: 171px; height: 127px; padding-top: 31px; border-radius: 9px; color: #fff; text-align: center; font-size: 10px; line-height: 12px; font-weight: 400; }
.card h2 { font-size: 12px; line-height: 15px; }
.scroll-y { grid-column: 2; grid-row: 1 / 3; padding: 120px 1px 0; border-left: 1px solid #e0e0e0; }
.scroll-y .thumb { height: 437px; }
.scroll-x { grid-column: 1 / 3; grid-row: 3; padding: 1px 0 2px 229px; border: solid #dcdcdc; border-width: 1px 0; }
.scroll-x .thumb { width: 648px; height: 9px; }
.palette { height: 24px; display: flex; align-items: center; padding: 0 12px 2px 14px; color: #444; }
.swatches { flex: 1; height: 21px; display: flex; gap: 1px; margin-left: 15px; }
.swatches button { flex: 1; }

.side { flex: none; width: 52px; display: flex; flex-direction: column; border: solid #c9c9c9; border-width: 0 1px; color: #444; }
.side button { height: 51px; margin-bottom: 15px; display: grid; place-items: center; }
.side .side-top { height: 47px; margin: 0; padding: 2px 0 0 4px; color: #777; }
.side .active { background: #0080ff; color: #fff; }

.right { flex: none; width: 423px; display: flex; flex-direction: column; }
.right-head { height: 47px; background: #e0e0e0; text-align: center; font-size: 20px; line-height: 48px; font-weight: 700; }
.right-scroll { flex: 1; min-height: 0; display: flex; }
.right-list { flex: 1; overflow: hidden; padding: 23px 17px 0 22px; }
.right-thumb { height: 322px; background: #cfcfcf; }
.current { display: flex; }
.preview { flex: none; border: 1px solid #dcdcdc; background: #fffefa; font-family: "DejaVu Sans Mono", monospace; font-weight: 400; }
.rows { display: flex; flex-direction: column; padding-left: 45px; }
.rows button { height: 48px; display: flex; align-items: center; white-space: nowrap; color: #444; }
.rows .icon, .rows .aa { width: 32px; }
.rows span { margin-left: 18px; }
.aa { font: 700 25px/27px Lato, sans-serif; color: #444; }
.tabs { display: flex; margin: 23px 0 28px; }
.tabs button { flex: none; width: 94px; height: 91px; padding-top: 9px; display: flex; flex-direction: column; align-items: center; gap: 16px; }
.tabs .icon { color: #444; }
.tabs .active { background: #e0e0e0; }
.themes { display: grid; grid-template-columns: 180px 180px; gap: 7px; }
.themes button { height: 147px; border: 1px solid #dcdcdc; background: #fff; }
.themes svg { display: block; }

.status { height: 46px; flex: none; border-top: 1px solid #dcdcdc; display: flex; align-items: center; color: #000; }
.status .icon { color: #444; }
.film { padding-left: 25px; width: 83px; }
.page-pick { width: 171px; height: 36px; margin-right: 28px; display: flex; align-items: center; position: relative; border-right: 1px solid #d6d6d6; }
.page-pick .icon { position: absolute; right: 3px; color: #777; }
.page-tab { font-weight: 700; margin-right: 39px; }
.page-tab, .percent, .page-pick select { padding-top: 2px; }
.zoom { margin-left: auto; display: flex; align-items: center; padding-right: 43px; }
.zoom input { appearance: none; width: 123px; height: 18px; margin: 0 10px; background: linear-gradient(90deg, #c4c4c4 18px, #dedede 18px) 0 6px / 100% 6px no-repeat; border-radius: 3px; }
.zoom input::-webkit-slider-thumb { appearance: none; width: 18px; height: 18px; border: 3px solid #bbb; border-radius: 50%; background: #f8f8f8; }
.zoom button:nth-child(2) { margin-left: 17px; }
.percent { margin: 0 29px 0 20px; gap: 12px; }
.percent .icon { color: #888; }
.zoom button:last-child { margin-left: 12px; }
</style>
